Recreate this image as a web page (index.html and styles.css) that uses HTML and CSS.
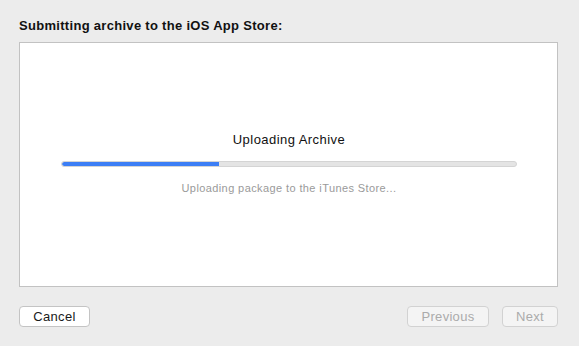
FILE: index.html
```html
<!DOCTYPE html>
<html lang="en">
<head>
  <meta charset="UTF-8">
  <meta name="viewport" content="width=device-width, initial-scale=1.0">
  <title>Submit Archive</title>
  <link rel="stylesheet" href="styles.css">
</head>
<body>
  <div class="sheet">
    <h1 class="sheet-title">Submitting archive to the iOS App Store:</h1>

    <div class="panel">
      <div class="status">
        <div class="status-title">Uploading Archive</div>
        <div class="progress">
          <div class="progress-fill" style="width: 34.6%"></div>
        </div>
        <div class="status-detail">Uploading package to the iTunes Store...</div>
      </div>
    </div>

    <div class="actions">
      <button class="btn btn-cancel">Cancel</button>
      <div class="nav-buttons">
        <button class="btn btn-prev" disabled>Previous</button>
        <button class="btn btn-next" disabled>Next</button>
      </div>
    </div>
  </div>
</body>
</html>
```

FILE: styles.css
```css
html, body {
  margin: 0;
  height: 100%;
}
body {
  background-color: #ececec;
  font-family: "Liberation Sans", Arial, sans-serif;
  color: #111;
}
.sheet {
  padding: 18px 21px 0 19px;
}
.sheet-title {
  margin: 0 0 8px 0;
  font-size: 13px;
  line-height: 16px;
  font-weight: bold;
  letter-spacing: 0.3px;
  color: #111;
}
.panel {
  height: 243px;
  background-color: #fff;
  border: 1px solid #c2c2c2;
  display: flex;
  flex-direction: column;
  justify-content: center;
}
.status {
  padding: 0 40px 2px 41px;
  text-align: center;
}
.status-title {
  font-size: 13px;
  line-height: 16px;
  letter-spacing: 0.45px;
  color: #111;
}
.progress {
  margin-top: 13px;
  height: 4px;
  background-color: #e4e4e4;
  border: 1px solid #d4d4d4;
  border-radius: 3px;
  overflow: hidden;
}
.progress-fill {
  height: 100%;
  background-color: #3c7ef5;
  border-radius: 3px 0 0 3px;
}
.status-detail {
  margin-top: 14px;
  font-size: 11px;
  line-height: 14px;
  letter-spacing: 0.4px;
  color: #9a9a9a;
}
.actions {
  margin-top: 19px;
  display: flex;
  justify-content: space-between;
}
.nav-buttons {
  display: flex;
  gap: 13px;
}
.btn {
  height: 21px;
  padding: 0;
  font-family: "Liberation Sans", Arial, sans-serif;
  font-size: 13px;
  line-height: 19px;
  letter-spacing: 0.3px;
  border-radius: 4px;
  background-color: #fff;
  border: 1px solid #c4c4c4;
  color: #1a1a1a;
}
.btn:disabled {
  background-color: #f4f4f4;
  border-color: #d2d2d2;
  color: #ababab;
}
.btn-cancel {
  width: 71px;
}
.btn-prev {
  width: 82px;
}
.btn-next {
  width: 56px;
}
```
